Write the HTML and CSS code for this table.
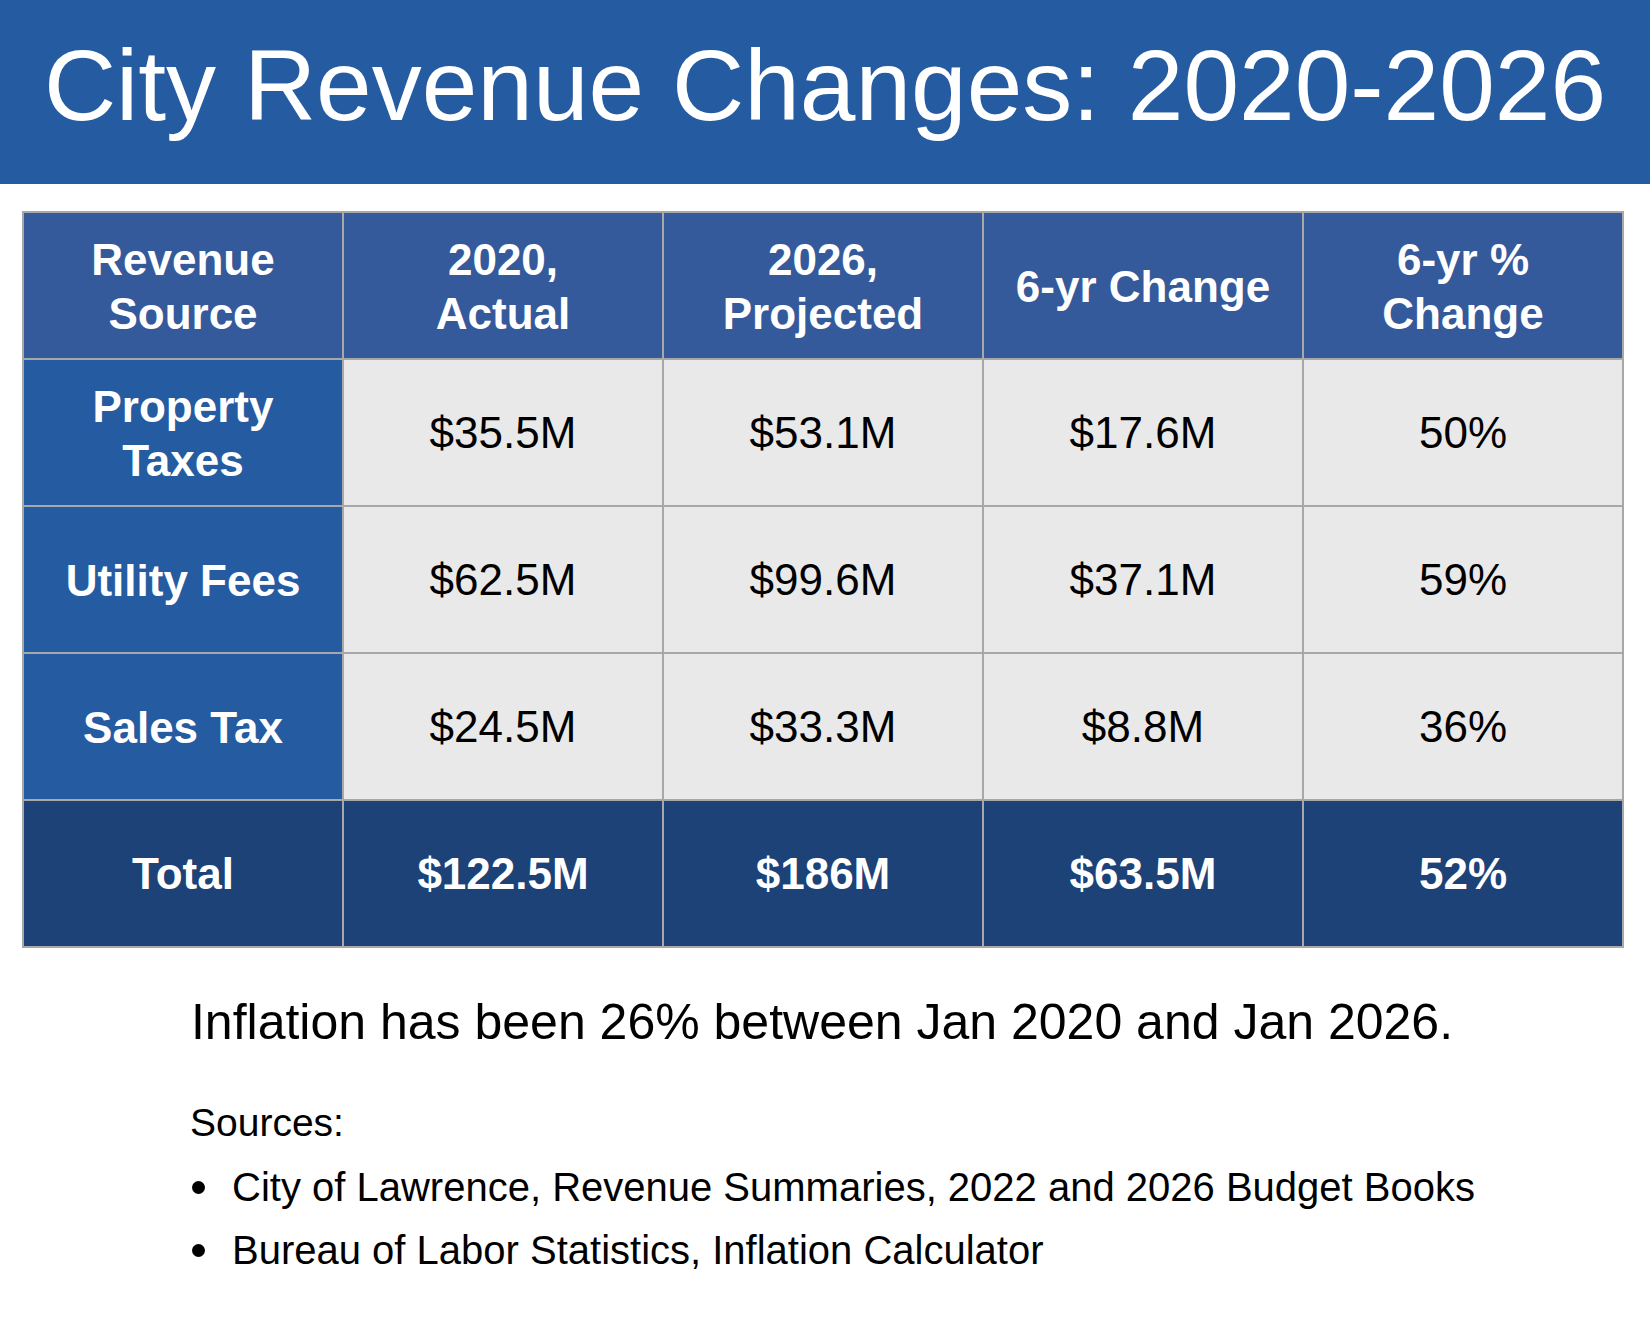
FILE: index.html
```html
<!DOCTYPE html>
<html lang="en">
<head>
<meta charset="utf-8">
<title>City Revenue Changes: 2020-2026</title>
<link rel="stylesheet" href="styles.css">
</head>
<body>
<header class="banner">
  <h1 class="banner-title">City Revenue Changes: 2020-2026</h1>
</header>
<main class="content">
  <div class="rev-table">
    <div class="cell head">Revenue<br>Source</div>
    <div class="cell head">2020,<br>Actual</div>
    <div class="cell head">2026,<br>Projected</div>
    <div class="cell head">6-yr Change</div>
    <div class="cell head">6-yr %<br>Change</div>

    <div class="cell label">Property<br>Taxes</div>
    <div class="cell data">$35.5M</div>
    <div class="cell data">$53.1M</div>
    <div class="cell data">$17.6M</div>
    <div class="cell data">50%</div>

    <div class="cell label">Utility Fees</div>
    <div class="cell data">$62.5M</div>
    <div class="cell data">$99.6M</div>
    <div class="cell data">$37.1M</div>
    <div class="cell data">59%</div>

    <div class="cell label">Sales Tax</div>
    <div class="cell data">$24.5M</div>
    <div class="cell data">$33.3M</div>
    <div class="cell data">$8.8M</div>
    <div class="cell data">36%</div>

    <div class="cell total">Total</div>
    <div class="cell total">$122.5M</div>
    <div class="cell total">$186M</div>
    <div class="cell total">$63.5M</div>
    <div class="cell total">52%</div>
  </div>

  <section class="notes">
    <p class="inflation">Inflation has been 26% between Jan 2020 and Jan 2026.</p>
    <p class="sources-head">Sources:</p>
    <ul class="sources">
      <li class="source">City of Lawrence, Revenue Summaries, 2022 and 2026 Budget Books</li>
      <li class="source">Bureau of Labor Statistics, Inflation Calculator</li>
    </ul>
  </section>
</main>
</body>
</html>
```

FILE: styles.css
```css
* {
  box-sizing: border-box;
}

html, body {
  margin: 0;
  padding: 0;
  background: #ffffff;
}

body {
  font-family: "Liberation Sans", Arial, Helvetica, sans-serif;
  color: #000000;
  width: 1650px;
}

.banner {
  background: #255ba0;
  height: 184px;
  padding-top: 28px;
}

.banner-title {
  margin: 0;
  font-size: 100px;
  line-height: 115px;
  font-weight: 400;
  color: #ffffff;
  text-align: center;
}

.content {
  padding: 27px 0 0 22px;
}

.rev-table {
  display: grid;
  grid-template-columns: repeat(5, 318px);
  grid-template-rows: repeat(5, 145px);
  gap: 2px;
  padding: 2px;
  width: 1602px;
  background: #a8a8a8;
}

.cell {
  display: flex;
  align-items: center;
  justify-content: center;
  text-align: center;
  font-size: 44px;
  line-height: 54px;
}

.head {
  background: #345a9b;
  color: #ffffff;
  font-weight: 700;
  padding-top: 3px;
}

.label {
  background: #255ba0;
  color: #ffffff;
  font-weight: 700;
  padding-top: 3px;
}

.data {
  background: #e9e9e9;
  color: #000000;
}

.total {
  background: #1c4277;
  color: #ffffff;
  font-weight: 700;
}

.notes {
  width: 1270px;
  margin: 0 0 0 168px;
}

.inflation {
  margin: 44px 0 0 0;
  padding-right: 6px;
  font-size: 50px;
  line-height: 60px;
  text-align: center;
}

.sources-head {
  margin: 47px 0 0 0;
  font-size: 39px;
  line-height: 47px;
}

.sources {
  list-style: none;
  margin: 18px 0 0 0;
  padding: 0;
  display: flex;
  flex-direction: column;
  gap: 16px;
}

.source {
  display: flex;
  align-items: center;
  white-space: nowrap;
  font-size: 40px;
  line-height: 47px;
}

.source::before {
  content: "";
  flex: 0 0 13px;
  width: 13px;
  height: 13px;
  border-radius: 50%;
  background: #000000;
  margin: 0 27px 0 2px;
}
```
